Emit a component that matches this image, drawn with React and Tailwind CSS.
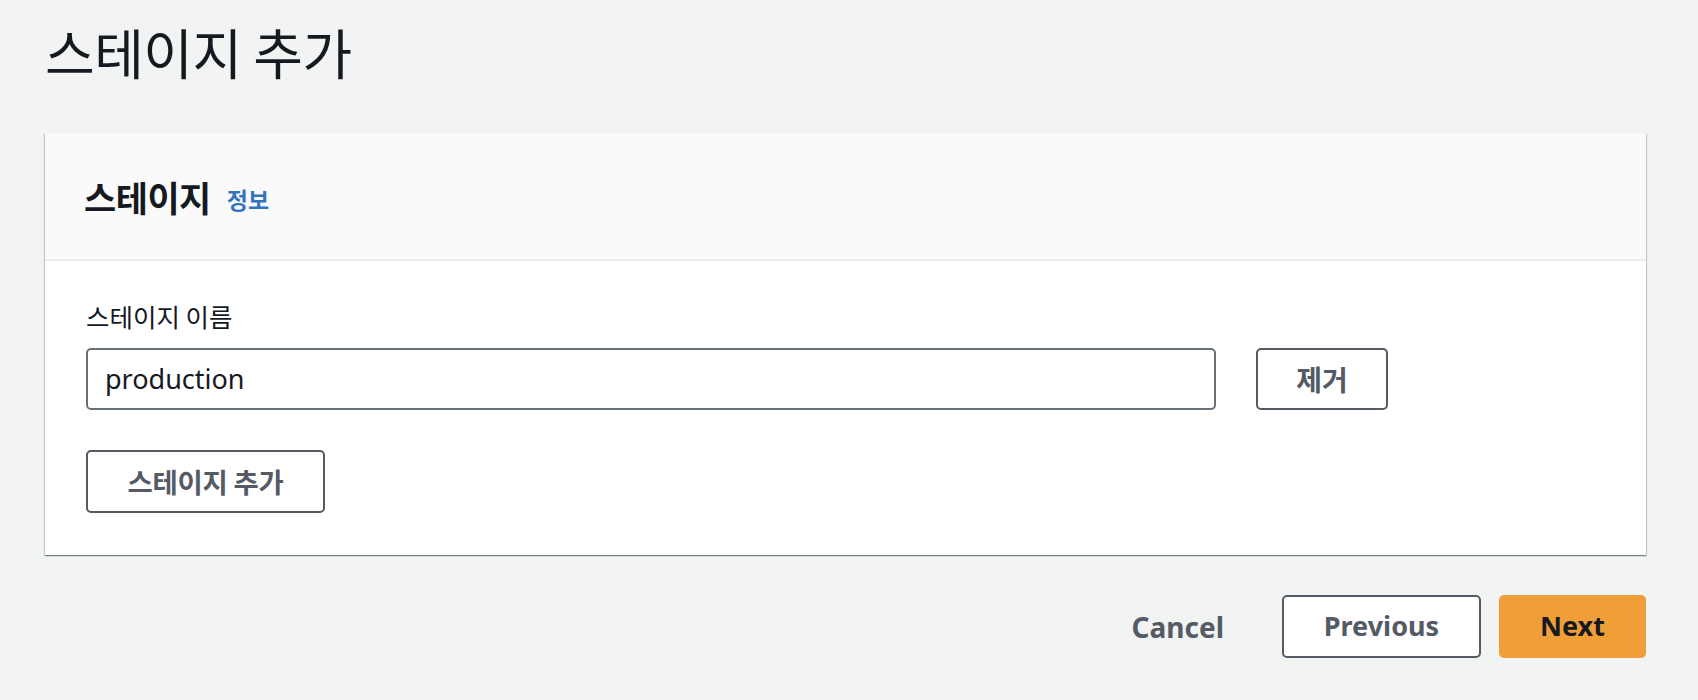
import React from 'react';

const KR = { fontFamily: '"Noto Sans CJK KR", "Noto Sans", sans-serif' };
const LATIN = { fontFamily: '"Noto Sans", "Noto Sans CJK KR", sans-serif' };

export default function App() {
  return (
    <div className="min-h-[700px] bg-[#f2f3f3] pl-[45px] pr-[52px] pt-[22px] text-[#16191f]" style={KR}>
      <h1 className="text-[54px] leading-[60px] font-normal tracking-[-0.5px]">스테이지 추가</h1>

      <div className="mt-[51px] bg-white shadow-[0_1px_1px_0_rgba(0,28,36,0.35),1px_1px_1px_0_rgba(0,28,36,0.15),-1px_1px_1px_0_rgba(0,28,36,0.15)]">
        <div className="h-[128px] bg-[#fafafa] border-b-2 border-[#eaeded] px-[39px] flex items-center gap-[16px]">
          <h2 className="text-[35px] font-bold leading-none tracking-[-0.5px]">스테이지</h2>
          <a href="#" className="text-[23px] font-bold text-[#3474bd] leading-none mt-[6px]">정보</a>
        </div>

        <div className="px-[41px] pt-[37px] pb-[42px]">
          <label className="block text-[25.5px] leading-[36px] mb-[14px]">스테이지 이름</label>
          <div className="flex items-center gap-[40px]">
            <div className="w-[1130px] h-[62px] border-2 border-[#687078] rounded-[5px] flex items-center px-[17px]">
              <span className="text-[27px] text-[#16191f]" style={LATIN}>production</span>
            </div>
            <button className="w-[132px] h-[62px] border-2 border-[#545b64] rounded-[5px] bg-white text-[28px] font-bold text-[#545b64]">
              제거
            </button>
          </div>
          <button className="mt-[40px] w-[239px] h-[63px] border-2 border-[#545b64] rounded-[5px] bg-white text-[27.5px] font-bold text-[#545b64] tracking-[-0.3px]">
            스테이지 추가
          </button>
        </div>
      </div>

      <div className="mt-[40px] flex justify-end items-center" style={LATIN}>
        <button className="text-[28px] font-bold text-[#545b64] mr-[58px]">Cancel</button>
        <button className="w-[199px] h-[63px] border-2 border-[#545b64] rounded-[5px] bg-white text-[27px] font-bold text-[#545b64]">
          Previous
        </button>
        <button className="ml-[18px] w-[147px] h-[63px] rounded-[5px] bg-[#f09e38] text-[27px] font-bold text-[#16191f]">
          Next
        </button>
      </div>
    </div>
  );
}
